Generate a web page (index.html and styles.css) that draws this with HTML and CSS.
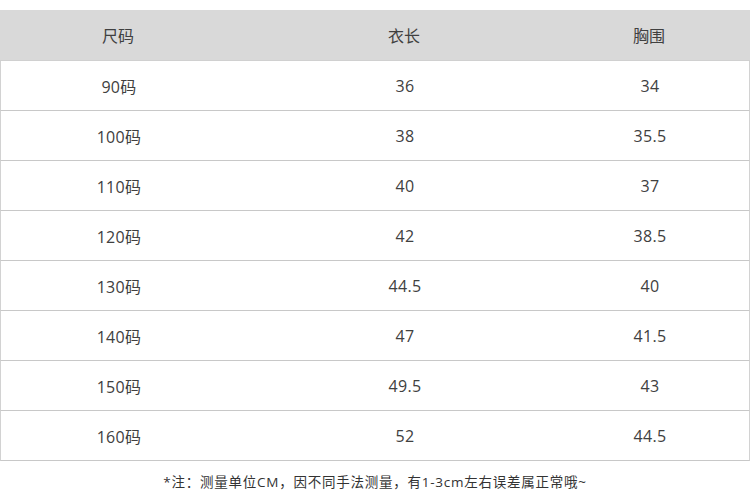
FILE: index.html
```html
<!DOCTYPE html>
<html lang="zh-CN">
<head>
<meta charset="utf-8">
<link rel="stylesheet" href="styles.css">
</head>
<body>
<div class="page">
  <div class="table">
    <div class="row head"><div class="c1">尺码</div><div class="c2">衣长</div><div class="c3">胸围</div></div>
    <div class="row"><div class="c1">90码</div><div class="c2">36</div><div class="c3">34</div></div>
    <div class="row"><div class="c1">100码</div><div class="c2">38</div><div class="c3">35.5</div></div>
    <div class="row"><div class="c1">110码</div><div class="c2">40</div><div class="c3">37</div></div>
    <div class="row"><div class="c1">120码</div><div class="c2">42</div><div class="c3">38.5</div></div>
    <div class="row"><div class="c1">130码</div><div class="c2">44.5</div><div class="c3">40</div></div>
    <div class="row"><div class="c1">140码</div><div class="c2">47</div><div class="c3">41.5</div></div>
    <div class="row"><div class="c1">150码</div><div class="c2">49.5</div><div class="c3">43</div></div>
    <div class="row"><div class="c1">160码</div><div class="c2">52</div><div class="c3">44.5</div></div>
  </div>
  <p class="note">*注：测量单位CM，因不同手法测量，有1-3cm左右误差属正常哦~</p>
</div>
</body>
</html>
```
FILE: styles.css
```css
html, body { margin: 0; padding: 0; background: #fff; }
body {
  font-family: "Open Sans", "Noto Sans CJK SC", sans-serif;
  color: #404040;
  width: 750px;
  height: 500px;
  overflow: hidden;
}
.page { padding-top: 10px; }
.table { width: 750px; }
.row {
  display: grid;
  grid-template-columns: 236px 336px 178px;
  height: 50px;
  align-items: center;
  font-size: 16px;
  letter-spacing: 0.3px;
  border-left: 1px solid #d2d2d2;
  border-right: 1px solid #d2d2d2;
  border-bottom: 1px solid #c8c8c8;
  box-sizing: border-box;
  text-align: center;
}
.row.head {
  background: #d9d9d9;
  height: 51px;
  border: none;
  border-bottom: 1px solid #d0d0d0;
  letter-spacing: 0;
}
.c3 { padding-right: 24px; }
.note {
  margin: 10px 0 0;
  text-align: center;
  font-size: 13.5px;
  letter-spacing: 0.75px;
  color: #333;
}
```
